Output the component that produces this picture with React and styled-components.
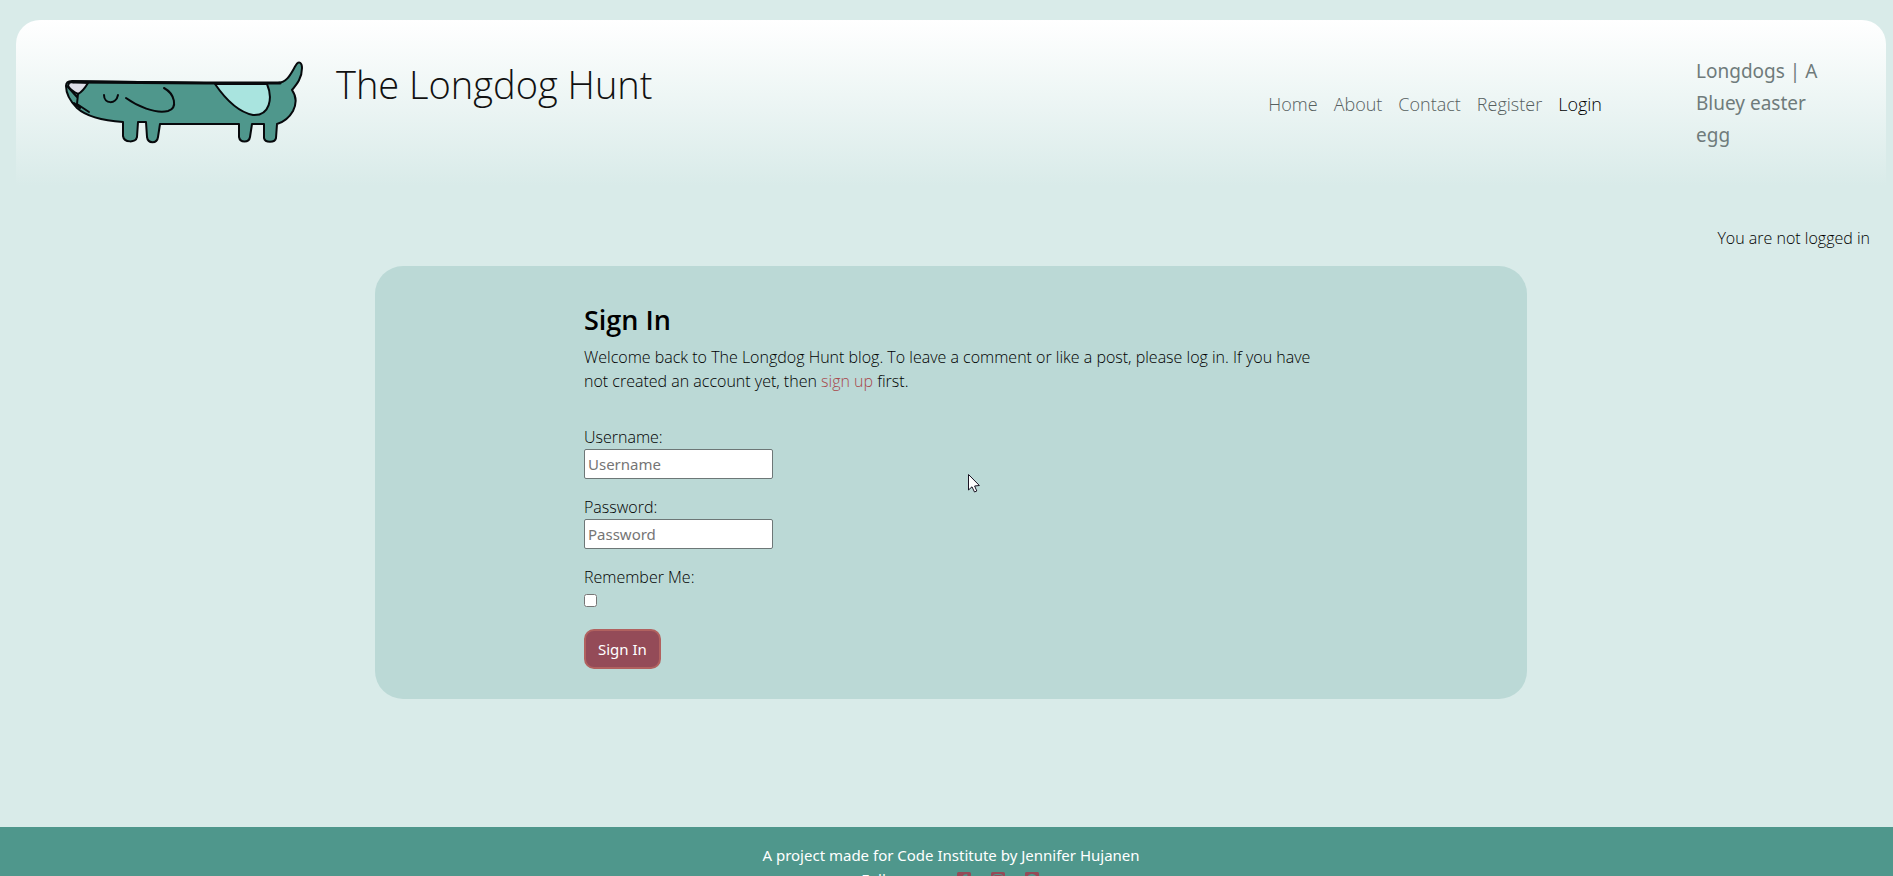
import React from "react";
import styled, { createGlobalStyle } from "styled-components";
import { FaFacebookSquare, FaInstagramSquare, FaGithubSquare } from "react-icons/fa";

const regularFont = `"Noto Sans", "Open Sans", sans-serif`;

const GlobalStyle = createGlobalStyle`
  *, *::before, *::after { box-sizing: border-box; }
  body {
    margin: 0;
    background: #d9ebe9;
    color: #000;
    font-family: "Open Sans", "Noto Sans", sans-serif;
    font-size: 16px;
    font-weight: 300;
    line-height: 24px;
  }
`;

const Shell = styled.div`
  padding: 20px 7px 0 16px;
`;

const Header = styled.header`
  display: flex;
  align-items: center;
  height: 166px;
  padding: 0 62px 0 48px;
  border-radius: 24px 24px 0 0;
  background: linear-gradient(#fff, #d9ebe9);
`;

const LogoLink = styled.a`
  display: block;
  width: 242px;
  height: 88px;
`;

const Title = styled.h1`
  flex: 1;
  margin: 0;
  padding: 0 0 38px 30px;
  color: #111;
  font-size: 38px;
  font-weight: 300;
  line-height: 48px;
`;

const NavList = styled.ul`
  display: flex;
  gap: 16px;
  margin: 0 94px 0 0;
  padding: 2px 0 0;
  list-style: none;
`;

const NavLink = styled.a`
  color: ${(p) => (p.$active ? "#000" : "#566060")};
  font-size: 18px;
  text-decoration: none;
`;

const Brand = styled.a`
  width: 128px;
  color: #6f7b7b;
  font-family: ${regularFont};
  font-size: 19px;
  font-weight: 400;
  line-height: 32px;
  text-decoration: none;
`;

const Status = styled.p`
  margin: 0;
  padding: 40px 16px 16px 0;
  text-align: right;
`;

const Card = styled.section`
  max-width: 1152px;
  margin: 0 auto;
  padding: 36px 209px 30px;
  border-radius: 28px;
  background: #bbd9d6;
`;

const CardTitle = styled.h2`
  margin: 0 0 7px;
  font-size: 27px;
  font-weight: 600;
  line-height: 36px;
`;

const Intro = styled.p`
  margin: 0 0 32px;
`;

const TextLink = styled.a`
  color: #a8474a;
  text-decoration: none;
`;

const Form = styled.form`
  display: flex;
  flex-direction: column;
  align-items: flex-start;
  gap: 16px;
`;

const Field = styled.div`
  display: flex;
  flex-direction: column;
  align-items: flex-start;
`;

const TextInput = styled.input`
  width: 189px;
  height: 30px;
  padding: 1px 3px;
  border: 1px solid #6d7777;
  border-radius: 2px;
  background: #fff;
  font: 400 15px ${regularFont};
  &::placeholder { color: #757575; opacity: 1; }
`;

const Checkbox = styled.input`
  width: 13px;
  height: 13px;
  margin: 5px 0 6px;
`;

const SubmitButton = styled.button`
  height: 40px;
  padding: 0 12px;
  border: 2px solid #b1615f;
  border-radius: 10px;
  background: #944b58;
  color: #fff;
  font: 400 15px ${regularFont};
`;

const Footer = styled.footer`
  margin-top: 128px;
  padding: 16px 0 24px 9px;
  background: #4f978c;
  color: #fff;
  font-family: ${regularFont};
  font-size: 15px;
  font-weight: 400;
  text-align: center;
`;

const FooterText = styled.p`
  margin: 0;
`;

const SocialRow = styled.div`
  display: flex;
  justify-content: center;
  align-items: center;
  padding-left: 8px;
`;

const SocialLabel = styled.span`
  margin-right: 16px;
`;

const SocialLink = styled.a`
  display: flex;
  padding: 0 9px;
  color: #944b58;
  font-size: 16px;
`;

const Pointer = styled.svg`
  position: absolute;
  top: 473px;
  left: 967px;
  pointer-events: none;
`;

function DogLogo() {
  return (
    <svg width="242" height="88" viewBox="64 59 242 88" fill="none" stroke="#07090c" strokeWidth="2" strokeLinecap="round" strokeLinejoin="round" aria-hidden="true">
      <path
        fill="#4f978c"
        d="M72 81 L205 83 L278 83 C288 82 291 73 296 65 C299 60 302 63 302 68 C302 78 297 84 292 90 C297 97 296 105 293 111 C289 118 284 122 277 124 L276 138 C275 143 265 143 264 138 L264 124 L252 124 L250 137 C249 143 240 143 239 137 L239 124 L160 124 L158 137 C157 144 148 144 147 137 L146 122 L138 122 L137 137 C136 143 124 143 123 136 L123 122 C108 121 88 118 77 108 C70 101 66 93 66 86 C66 83 68 81 72 81 Z"
      />
      <path fill="#ddddE7" d="M69 83 C72 81 80 82 88 83 C85 88 82 92 78 94 C74 92 70 89 68 86 Z" />
      <path d="M78 94 L77 104 M68 87 L77 97 M77 104 L89 112 M74 103 L80 108" />
      <path d="M104 95 C104 104 116 105 118 95" />
      <path d="M126 98 C137 106 155 114 168 111 C178 108 175 94 164 88" />
      <path fill="#a9e4df" d="M215 84 C226 100 238 112 253 115 C270 116 273 98 267 84 Z" />
      <path strokeWidth="3" d="M73 82 L206 83 L280 83" />
    </svg>
  );
}

const links = ["Home", "About", "Contact", "Register", "Login"];

export default function App() {
  return (
    <>
      <GlobalStyle />
      <Shell>
        <Header>
          <LogoLink href="#home" aria-label="The Longdog Hunt home"><DogLogo /></LogoLink>
          <Title>The Longdog Hunt</Title>
          <nav>
            <NavList>
              {links.map((name) => (
                <li key={name}>
                  <NavLink href={`#${name.toLowerCase()}`} $active={name === "Login"}>{name}</NavLink>
                </li>
              ))}
            </NavList>
          </nav>
          <Brand href="#longdogs">Longdogs | A Bluey easter egg</Brand>
        </Header>
        <Status>You are not logged in</Status>
        <main>
          <Card>
            <CardTitle>Sign In</CardTitle>
            <Intro>
              Welcome back to The Longdog Hunt blog. To leave a comment or like a post, please log in. If you have
              not created an account yet, then <TextLink href="#signup">sign up</TextLink> first.
            </Intro>
            <Form onSubmit={(e) => e.preventDefault()}>
              <Field>
                <label htmlFor="username">Username:</label>
                <TextInput id="username" type="text" placeholder="Username" />
              </Field>
              <Field>
                <label htmlFor="password">Password:</label>
                <TextInput id="password" type="password" placeholder="Password" />
              </Field>
              <Field>
                <label htmlFor="remember">Remember Me:</label>
                <Checkbox id="remember" type="checkbox" />
              </Field>
              <SubmitButton type="submit">Sign In</SubmitButton>
            </Form>
          </Card>
        </main>
      </Shell>
      <Footer>
        <FooterText>A project made for Code Institute by Jennifer Hujanen</FooterText>
        <SocialRow>
          <SocialLabel>Follow us:</SocialLabel>
          <SocialLink href="#facebook" aria-label="Facebook"><FaFacebookSquare /></SocialLink>
          <SocialLink href="#instagram" aria-label="Instagram"><FaInstagramSquare /></SocialLink>
          <SocialLink href="#github" aria-label="GitHub"><FaGithubSquare /></SocialLink>
        </SocialRow>
      </Footer>
      <Pointer width="14" height="21" viewBox="0 0 14 21" aria-hidden="true">
        <path d="M1.5 1.5 L1.5 17 L5 13.8 L7.5 19 L9.8 18 L7.6 13 L12.4 12.5 Z" fill="#fff" stroke="#1a1423" />
      </Pointer>
    </>
  );
}
